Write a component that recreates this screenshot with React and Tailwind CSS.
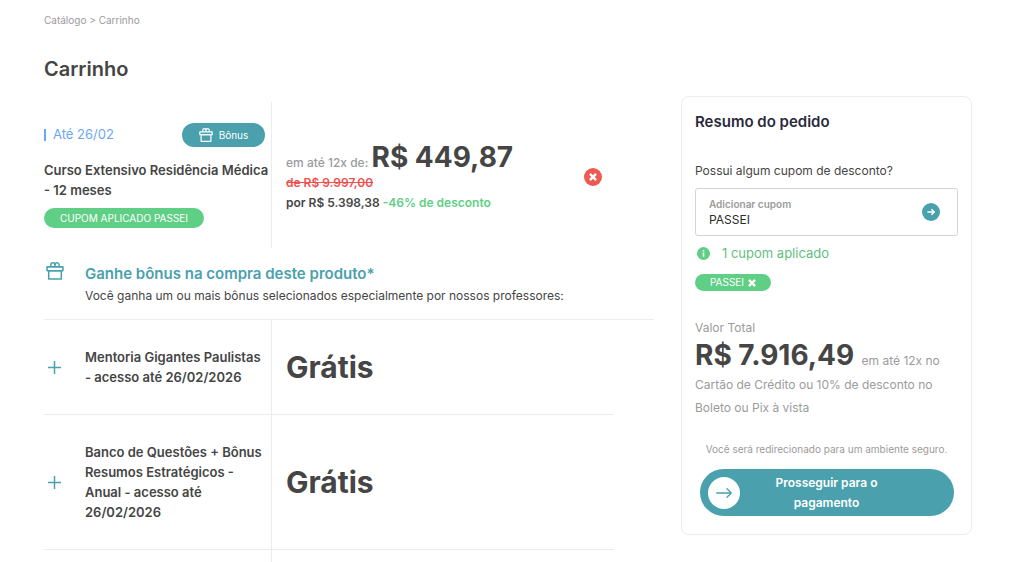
import { useState } from 'react';

const bonuses = [
  { id: 1, name: 'Mentoria Gigantes Paulistas - acesso até 26/02/2026' },
  { id: 2, name: 'Banco de Questões + Bônus Resumos Estratégicos - Anual - acesso até 26/02/2026' },
];

function GiftIcon({ className }) {
  return (
    <svg className={className} viewBox="0 0 20 20" fill="none" stroke="currentColor" strokeWidth="1.7" strokeLinejoin="round" aria-hidden="true">
      <path d="M1.2 5.400h17.600v4.200H1.200z" />
      <path d="M3 9.600h14V19H3z" />
      <path d="M5.400 5.400V3.200a2.200 2.200 0 0 1 4.600 0v2.200" />
      <path d="M14.600 5.400V3.200a2.200 2.200 0 0 0-4.600 0" />
    </svg>
  );
}

function CrossIcon({ className }) {
  return (
    <svg className={className} viewBox="0 0 10 10" fill="none" stroke="currentColor" strokeWidth="3" aria-hidden="true">
      <path d="M1.2 1.2l7.600 7.600M8.800 1.200l-7.600 7.600" />
    </svg>
  );
}

function CartItem() {
  return (
    <div className="flex">
      <div className="w-[228px] shrink-0 border-r border-[#ececec] pt-[21px] pb-5">
        <div className="flex items-center justify-between pr-[6px]">
          <span className="flex items-center gap-[7px] text-[13px] text-[#6ba6f5]">
            <span className="h-3 w-[2px] bg-[#6ba6f5]" />
            Até 26/02
          </span>
          <button type="button" className="flex h-6 w-[83px] items-center justify-center gap-[6px] rounded-full bg-[#4aa1ad] text-[10px] text-white">
            <GiftIcon className="size-[14px]" />
            Bônus
          </button>
        </div>
        <h2 className="mt-[13px] text-[13px] leading-5 font-semibold text-[#454545]">
          Curso Extensivo Residência Médica - 12 meses
        </h2>
        <span className="mt-2 flex h-5 w-40 items-center justify-center rounded-full bg-[#5fcf85] text-[10px] text-white">
          CUPOM APLICADO PASSEI
        </span>
      </div>
      <div className="flex flex-1 items-center justify-between pt-1 pr-[52px] pl-[14px]">
        <div className="text-[12px] leading-5 font-semibold whitespace-nowrap text-[#454545]">
          <p className="font-medium text-[#9b9b9b]">
            em até 12x de: <strong className="text-[28px] leading-8 font-bold text-[#454545]">R$ 449,87</strong>
          </p>
          <p className="text-[#ef5350]"><s>de R$ 9.997,00</s></p>
          <p>por R$ 5.398,38 <span className="text-[#5fcf85]">-46% de desconto</span></p>
        </div>
        <button type="button" aria-label="Remover" className="flex size-[18px] items-center justify-center rounded-full bg-[#ec5a53] text-white">
          <CrossIcon className="size-2" />
        </button>
      </div>
    </div>
  );
}

function BonusRow({ name }) {
  return (
    <li className="mr-10 flex border-b border-[#ececec]">
      <div className="flex w-[228px] shrink-0 items-center border-r border-[#ececec] py-[27px] pr-2">
        <button type="button" aria-label="Ver detalhes" className="flex w-[41px] shrink-0 pl-1 text-[#4aa1ad]">
          <svg className="size-[13px]" viewBox="0 0 13 13" fill="none" stroke="currentColor" strokeWidth="1.5" aria-hidden="true">
            <path d="M6.5 0v13M0 6.5h13" />
          </svg>
        </button>
        <h4 className="text-[13px] leading-5 font-semibold text-[#454545]">{name}</h4>
      </div>
      <p className="flex items-center pl-[14px] text-[30px] font-bold text-[#454545]">Grátis</p>
    </li>
  );
}

function OrderSummary() {
  const [coupon, setCoupon] = useState('PASSEI');

  return (
    <aside className="w-[291px] shrink-0 self-start rounded-lg border border-[#ececec] px-[13px] pt-[15px] pb-[18px]">
      <h2 className="text-[15px] leading-5 font-semibold text-[#2a2a3c]">Resumo do pedido</h2>
      <p className="mt-[29px] text-[12px] leading-5 text-[#454545]">Possui algum cupom de desconto?</p>

      <div className="mt-[7px] flex h-12 items-center rounded-[3px] border border-[#d4d4d4] pr-[17px] pl-[13px]">
        <div className="flex min-w-0 flex-1 flex-col">
          <label htmlFor="coupon" className="text-[10px] leading-4 font-semibold text-[#9b9b9b]">Adicionar cupom</label>
          <input
            id="coupon"
            type="text"
            value={coupon}
            onChange={(e) => setCoupon(e.target.value)}
            className="w-full text-[12px] leading-4 text-[#2b2b2b] outline-none"
          />
        </div>
        <button type="button" aria-label="Aplicar cupom" className="flex size-[18px] items-center justify-center rounded-full bg-[#4aa1ad] text-white">
          <svg className="size-2" viewBox="0 0 10 10" fill="none" stroke="currentColor" strokeWidth="2" aria-hidden="true">
            <path d="M0.5 5h8.5M5.5 1.5L9 5 5.5 8.5" />
          </svg>
        </button>
      </div>

      <p className="mt-[7px] flex items-center gap-3 pl-[2px] text-[13px] leading-5 text-[#5fbf7f]">
        <svg className="size-[13px]" viewBox="0 0 13 13" aria-hidden="true">
          <circle cx="6.5" cy="6.5" r="6.5" fill="#5fcf85" />
          <path d="M6.5 5.6v4.200M6.5 3v1.500" stroke="#fff" strokeWidth="1.6" />
        </svg>
        1 cupom aplicado
      </p>
      <button type="button" className="mt-[11px] flex h-[17px] w-[76px] items-center justify-center gap-1 rounded-full bg-[#5fcf85] text-[10px] text-white">
        PASSEI
        <CrossIcon className="size-2" />
      </button>

      <p className="mt-[27px] text-[12px] leading-5 text-[#9b9b9b]">Valor Total</p>
      <p className="text-[12px] leading-[23px] text-[#9b9b9b]">
        <strong className="mr-1 text-[28px] leading-[35px] font-bold text-[#454545]">R$ 7.916,49</strong>{' '}
        em até 12x no Cartão de Crédito ou 10% de desconto no Boleto ou Pix à vista
      </p>

      <p className="mt-[22px] text-center text-[10px] leading-4 text-[#9b9b9b]">
        Você será redirecionado para um ambiente seguro.
      </p>
      <button type="button" className="relative mx-auto mt-3 flex h-[47px] w-[254px] items-center justify-center rounded-full bg-[#4aa1ad] px-14 text-[12px] leading-5 font-semibold text-white">
        <span className="absolute left-2 flex size-8 items-center justify-center rounded-full bg-white text-[#4aa1ad]">
          <svg className="h-[10px] w-4" viewBox="0 0 16 10" fill="none" stroke="currentColor" strokeWidth="1.3" strokeLinecap="round" strokeLinejoin="round" aria-hidden="true">
            <path d="M0.7 5h14.600M11 0.7L15.300 5 11 9.300" />
          </svg>
        </span>
        Prosseguir para o pagamento
      </button>
    </aside>
  );
}

export default function App() {
  return (
    <div className="flex h-screen flex-col overflow-hidden bg-white pr-[52px] pl-11 font-['Inter',sans-serif]">
      <nav className="pt-3 text-[10px] leading-4 text-[#9b9b9b]">
        <a href="#catalogo">Catálogo</a> &gt; <a href="#carrinho">Carrinho</a>
      </nav>
      <h1 className="mt-[27px] text-[20px] leading-7 font-semibold text-[#454545]">Carrinho</h1>

      <div className="mt-[13px] flex min-h-0 flex-1 gap-[27px]">
        <main className="flex min-w-0 flex-1 flex-col pt-[6px]">
          <CartItem />
          <div className="flex border-b border-[#ececec] pt-[14px] pb-[13px]">
            <div className="w-[41px] shrink-0 pl-[2px] text-[#4aa1ad]">
              <GiftIcon className="size-[18px]" />
            </div>
            <div>
              <h3 className="text-[15px] leading-6 font-semibold text-[#4aa1ad]">Ganhe bônus na compra deste produto*</h3>
              <p className="text-[12px] leading-5 text-[#454545]">
                Você ganha um ou mais bônus selecionados especialmente por nossos professores:
              </p>
            </div>
          </div>
          <ul>
            {bonuses.map((bonus) => (
              <BonusRow key={bonus.id} name={bonus.name} />
            ))}
          </ul>
          <div className="w-[228px] flex-1 border-r border-[#ececec]" />
        </main>
        <OrderSummary />
      </div>
    </div>
  );
}
